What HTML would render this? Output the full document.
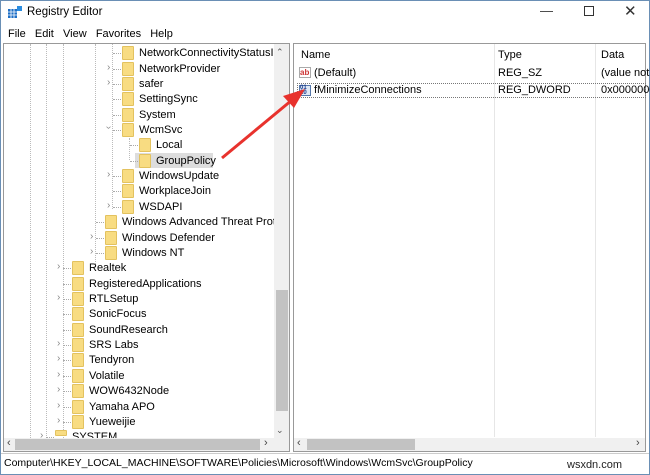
<!DOCTYPE html><html><head><style>
*{margin:0;padding:0;box-sizing:border-box}
body{width:650px;height:475px;overflow:hidden;background:#fff;font-family:"Liberation Sans",sans-serif;font-size:11px;color:#000;position:relative}
.a{position:absolute}
.frame{left:0;top:0;width:650px;height:475px;border:1px solid #6a8fb5}
.row{position:absolute;height:15px;line-height:15px;white-space:nowrap}
.f{position:absolute;width:12px;height:14px;background:#f8dc82;border:1px solid #e3c25f;border-radius:1px}
.ch{position:absolute;color:#888;font-size:10px}
.dots{position:absolute;border-top:1px dotted #aaa;width:8px}
.vl{position:absolute;border-left:1px dotted #bbb}
</style></head><body>
<div class="a frame"></div>
<div class="a" style="left:8px;top:6px;width:13px;height:12px">
<svg width="14" height="13"><rect x="0" y="3" width="9" height="9" fill="#1e6fc6"/><rect x="9" y="0" width="5" height="5" fill="#2b8de0"/><path d="M3 3v9M6 3v9M0 6h9M0 9h9" stroke="#fff" stroke-width=".8"/></svg></div>
<div class="a" style="left:27px;top:6px;font-size:11.5px">Registry Editor</div>
<div class="a" style="left:540px;top:3px;font-size:13px;color:#333">&#8212;</div>
<div class="a" style="left:584px;top:6px;width:10px;height:10px;border:1px solid #333"></div>
<div class="a" style="left:624px;top:2px;font-size:15px;color:#333">&#10005;</div>
<div class="a" style="left:8px;top:28px">File&nbsp;&nbsp;&nbsp;Edit&nbsp;&nbsp;&nbsp;View&nbsp;&nbsp;&nbsp;Favorites&nbsp;&nbsp;&nbsp;Help</div>
<div class="a" style="left:3px;top:43px;width:287px;height:409px;border:1px solid #999"></div>
<div class="vl" style="left:30px;top:44px;height:394px"></div>
<div class="vl" style="left:46px;top:44px;height:394px"></div>
<div class="vl" style="left:63px;top:44px;height:394px"></div>
<div class="vl" style="left:95px;top:44px;height:220px"></div>
<div class="vl" style="left:112px;top:44px;height:165px"></div>
<div class="vl" style="left:129px;top:138px;height:22px"></div>
<div class="row" style="left:135px;top:153px;width:78px;background:#ddd"></div>
<div id="tree"></div>
<div class="row" style="left:139px;top:46px">NetworkConnectivityStatusInc</div>
<div class="row" style="left:139px;top:62px">NetworkProvider</div>
<div class="row" style="left:139px;top:77px">safer</div>
<div class="row" style="left:139px;top:92px">SettingSync</div>
<div class="row" style="left:139px;top:108px">System</div>
<div class="row" style="left:139px;top:123px">WcmSvc</div>
<div class="row" style="left:156px;top:138px">Local</div>
<div class="row" style="left:156px;top:154px">GroupPolicy</div>
<div class="row" style="left:139px;top:169px">WindowsUpdate</div>
<div class="row" style="left:139px;top:184px">WorkplaceJoin</div>
<div class="row" style="left:139px;top:200px">WSDAPI</div>
<div class="row" style="left:122px;top:215px">Windows Advanced Threat Protec</div>
<div class="row" style="left:122px;top:231px">Windows Defender</div>
<div class="row" style="left:122px;top:246px">Windows NT</div>
<div class="row" style="left:89px;top:261px">Realtek</div>
<div class="row" style="left:89px;top:277px">RegisteredApplications</div>
<div class="row" style="left:89px;top:292px">RTLSetup</div>
<div class="row" style="left:89px;top:307px">SonicFocus</div>
<div class="row" style="left:89px;top:323px">SoundResearch</div>
<div class="row" style="left:89px;top:338px">SRS Labs</div>
<div class="row" style="left:89px;top:353px">Tendyron</div>
<div class="row" style="left:89px;top:369px">Volatile</div>
<div class="row" style="left:89px;top:384px">WOW6432Node</div>
<div class="row" style="left:89px;top:400px">Yamaha APO</div>
<div class="row" style="left:89px;top:415px">Yueweijie</div>
<div class="row" style="left:72px;top:430px;height:8px;overflow:hidden">SYSTEM</div>
<script>
var R=[[53,139,1,0],[69,139,1,1],[84,139,1,1],[99,139,1,0],[115,139,1,0],[130,139,1,2],[145,156,1,0],[161,156,1,0],[176,139,1,1],[191,139,1,0],[207,139,1,1],[222,122,1,0],[238,122,1,1],[253,122,1,1],[268,89,1,1],[284,89,1,0],[299,89,1,1],[314,89,1,0],[330,89,1,0],[345,89,1,1],[360,89,1,1],[376,89,1,1],[391,89,1,1],[407,89,1,1],[422,89,1,1],[437,72,1,1]];
var h='';R.forEach(function(r){var y=r[0],x=r[1];var fh=y>430?6:14;
h+='<div class="f" style="left:'+(x-17)+'px;top:'+(y-7)+'px;height:'+fh+'px"></div>';
h+='<div class="dots" style="left:'+(x-26)+'px;top:'+y+'px"></div>';
if(r[3]==1)h+='<div class="ch" style="left:'+(x-32)+'px;top:'+(y-7)+'px">&#8250;</div>';
if(r[3]==2)h+='<div class="ch" style="left:'+(x-32)+'px;top:'+(y-8)+'px;transform:rotate(90deg)">&#8250;</div>';});
document.getElementById('tree').innerHTML=h;
</script>
<div class="a" style="left:274px;top:44px;width:15px;height:394px;background:#f0f0f0"></div>
<div class="a" style="left:276px;top:47px;font-size:9px;color:#555">&#8963;</div>
<div class="a" style="left:276px;top:290px;width:12px;height:121px;background:#c2c2c2"></div>
<div class="a" style="left:276px;top:425px;font-size:9px;color:#555">&#8964;</div>
<div class="a" style="left:4px;top:438px;width:285px;height:13px;background:#f0f0f0"></div>
<div class="a" style="left:15px;top:439px;width:245px;height:11px;background:#c2c2c2"></div>
<div class="a" style="left:7px;top:437px;font-size:11px;color:#444">&#8249;</div>
<div class="a" style="left:264px;top:437px;font-size:11px;color:#444">&#8250;</div>
<div class="a" style="left:293px;top:43px;width:353px;height:409px;border:1px solid #999"></div>
<div class="a" style="left:494px;top:44px;height:393px;border-left:1px solid #e6e6e6"></div>
<div class="a" style="left:595px;top:44px;height:393px;border-left:1px solid #e6e6e6"></div>
<div class="a" style="left:301px;top:49px">Name</div>
<div class="a" style="left:498px;top:49px">Type</div>
<div class="a" style="left:601px;top:49px">Data</div>
<div class="a" style="left:299px;top:67px;width:12px;height:11px;border:1px solid #aaa;font-size:8px;color:#c33;line-height:9px;font-weight:bold">ab</div>
<div class="a" style="left:314px;top:67px">(Default)</div>
<div class="a" style="left:498px;top:67px">REG_SZ</div>
<div class="a" style="left:601px;top:67px;white-space:nowrap">(value not</div>
<div class="a" style="left:297px;top:83px;width:349px;height:15px;border:1px dotted #777"></div>
<div class="a" style="left:299px;top:85px;width:12px;height:11px;background:#dfe8f5;border:1px solid #5577aa;font-size:6px;color:#1a3c8c;line-height:5px;font-weight:bold">01<br>10</div>
<div class="a" style="left:314px;top:84px">fMinimizeConnections</div>
<div class="a" style="left:498px;top:84px">REG_DWORD</div>
<div class="a" style="left:601px;top:84px">0x0000000</div>
<div class="a" style="left:294px;top:438px;width:351px;height:13px;background:#f0f0f0"></div>
<div class="a" style="left:307px;top:439px;width:108px;height:11px;background:#c2c2c2"></div>
<div class="a" style="left:297px;top:437px;font-size:11px;color:#444">&#8249;</div>
<div class="a" style="left:636px;top:437px;font-size:11px;color:#444">&#8250;</div>
<div class="a" style="left:1px;top:453px;width:648px;border-top:1px solid #ccc"></div>
<div class="a" style="left:4px;top:457px;font-size:10.5px">Computer\HKEY_LOCAL_MACHINE\SOFTWARE\Policies\Microsoft\Windows\WcmSvc\GroupPolicy</div>
<div class="a" style="left:567px;top:459px;font-size:11px;color:#222">wsxdn.com</div>
<svg class="a" style="left:0;top:0" width="650" height="475"><line x1="222" y1="158" x2="292" y2="100" stroke="#e8322d" stroke-width="3"/><polygon points="305,89 283,96 294,108" fill="#e8322d"/></svg>
</body></html>
